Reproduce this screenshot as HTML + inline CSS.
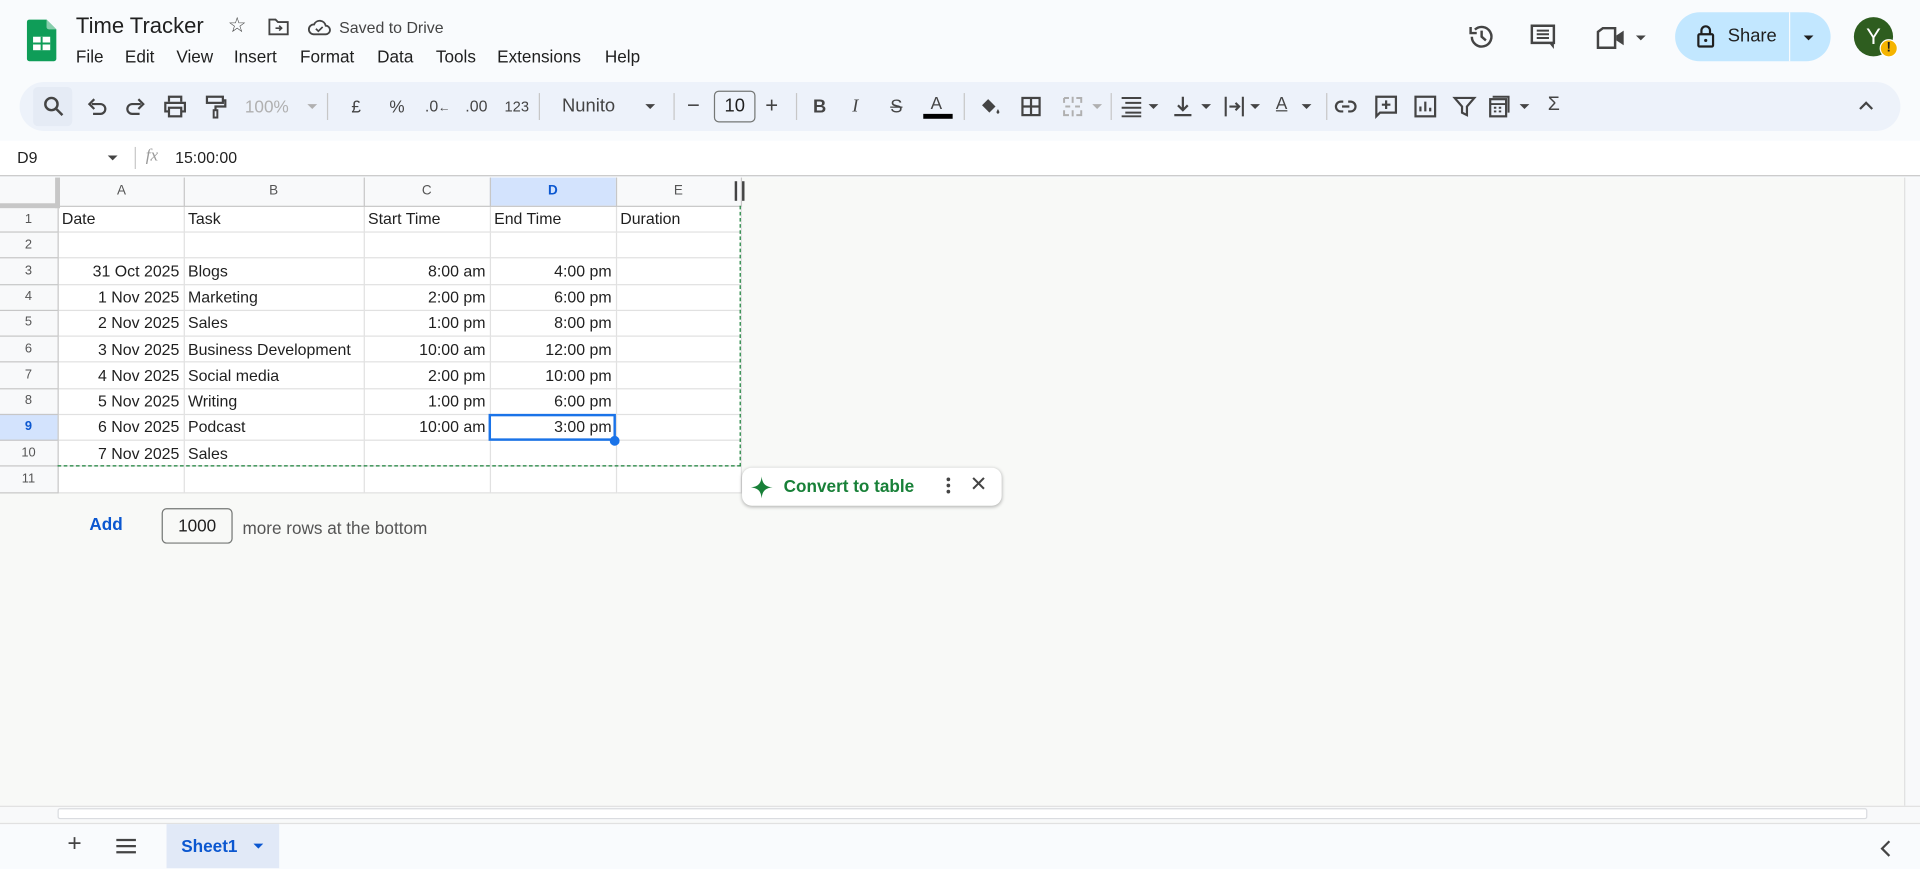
<!DOCTYPE html>
<html><head><meta charset="utf-8"><style>
*{box-sizing:border-box;margin:0;padding:0}
html,body{width:1920px;height:869px;overflow:hidden;background:#f9fbfd;font-family:"Liberation Sans",sans-serif;color:#1f1f1f}
#w{position:absolute;left:0;top:0;width:1568px;height:709px;transform:scale(1.22449);transform-origin:0 0;background:#f9fbfd}
.a{position:absolute}
.ic{position:absolute;top:78px;width:18px;height:18px}
svg{overflow:visible}
.tb{position:absolute;top:79px;font-size:14px;color:#444}
.sep{position:absolute;top:76px;width:1px;height:22px;background:#c7c7c7}
.arr{position:absolute;top:85px;width:0;height:0;border-left:4px solid transparent;border-right:4px solid transparent;border-top:4px solid #444}
table{border-collapse:collapse;table-layout:fixed;position:absolute;left:0;top:145px;background:#fff;font-size:13px}
td{border:1px solid #e1e1e1;height:21.27px;padding:0 3px;white-space:nowrap;overflow:visible;line-height:19px}
tr.h td{height:23px;background:#f8f9fa;color:#555;font-size:11px;text-align:center;border-color:#c7c7c7;border-top:none}
td.rh{background:#f8f9fa;color:#555;font-size:10.5px;text-align:center;border-color:#c7c7c7;padding:0;border-left:none}
.r{text-align:right}
</style></head><body><div id="w">
<svg class="a" style="left:22px;top:16px" width="24" height="34" viewBox="0 0 24 34"><path d="M2 0h14l8 8v24a2 2 0 0 1-2 2H2a2 2 0 0 1-2-2V2a2 2 0 0 1 2-2z" fill="#0f9d58"/><path d="M16 0l8 8h-6a2 2 0 0 1-2-2z" fill="#87ceac"/><rect x="5" y="14" width="14" height="11" fill="#fff"/><path d="M5 19.5h14M12 14v11" stroke="#0f9d58" stroke-width="1.6"/></svg>
<div class="a" style="left:62px;top:11px;font-size:18px">Time Tracker</div>
<div class="a" style="left:186px;top:11px;font-size:17px;color:#444">☆</div>
<svg class="a" style="left:219px;top:15px" width="17" height="14"><path d="M1 1h5l2 2h8v10H1z" fill="none" stroke="#444" stroke-width="1.5"/><path d="M6 8h5M9 6l2 2-2 2" stroke="#444" stroke-width="1.3" fill="none"/></svg>
<svg class="a" style="left:251px;top:15px" width="19" height="14"><path d="M5 13h10a3.5 3.5 0 0 0 0-7 5 5 0 0 0-9.5-1A4 4 0 0 0 5 13z" fill="none" stroke="#444" stroke-width="1.5"/><path d="M7 8.5l2 2 3.5-3.5" stroke="#444" stroke-width="1.4" fill="none"/></svg>
<div class="a" style="left:277px;top:15px;font-size:13px;color:#444">Saved to Drive</div>
<div class="a" style="left:62px;top:38px;font-size:14px;word-spacing:0">
<span class="a" style="left:0">File</span><span class="a" style="left:40px">Edit</span><span class="a" style="left:82px">View</span><span class="a" style="left:129px">Insert</span><span class="a" style="left:183px">Format</span><span class="a" style="left:246px">Data</span><span class="a" style="left:294px">Tools</span><span class="a" style="left:344px;white-space:nowrap">Extensions</span><span class="a" style="left:432px">Help</span></div>
<svg class="a" style="left:1199px;top:19px" width="22" height="22" viewBox="0 0 22 22"><path d="M3 11a8 8 0 1 0 2.5-5.8" fill="none" stroke="#444" stroke-width="2"/><path d="M2 3v5h5" fill="none" stroke="#444" stroke-width="2"/><path d="M11 6v5l3.5 3" fill="none" stroke="#444" stroke-width="2"/></svg>
<svg class="a" style="left:1250px;top:20px" width="21" height="22"><path d="M1 1h18v14H1z" fill="none" stroke="#444" stroke-width="2"/><path d="M5 5h10M5 8h10M5 11h10" stroke="#444" stroke-width="1.6"/><path d="M15 15h4v5z" fill="#444"/></svg>
<svg class="a" style="left:1304px;top:22px" width="24" height="18"><path d="M1 4l4-3h10v16H1z" fill="none" stroke="#444" stroke-width="2"/><path d="M16 7l6-4v12l-6-4z" fill="#444"/></svg>
<div class="arr" style="left:1336px;top:29px"></div>
<div class="a" style="left:1368px;top:10px;width:127px;height:40px;background:#c2e7ff;border-radius:20px"></div>
<div class="a" style="left:1461px;top:10px;width:1px;height:40px;background:#f9fbfd"></div>
<svg class="a" style="left:1386px;top:20px" width="14" height="19"><path d="M3.5 8V5a3.5 3.5 0 0 1 7 0v3" fill="none" stroke="#1f1f1f" stroke-width="1.8"/><rect x="1" y="8" width="12" height="10" rx="1" fill="none" stroke="#1f1f1f" stroke-width="1.8"/><circle cx="7" cy="13" r="1.3" fill="#1f1f1f"/></svg>
<div class="a" style="left:1411px;top:21px;font-size:15px;color:#1f1f1f">Share</div>
<div class="arr" style="left:1473px;top:29px;border-top-color:#1f1f1f"></div>
<div class="a" style="left:1514px;top:14px;width:32px;height:32px;border-radius:50%;background:#2e5d1f;color:#fff;font-size:18px;text-align:center;line-height:32px">Y</div>
<div class="a" style="left:1535px;top:32px;width:15px;height:15px;border-radius:50%;background:#f5b400;border:1px solid #fff;color:#1f1f1f;font-size:11px;font-weight:bold;text-align:center;line-height:13px">!</div>
<div class="a" style="left:16px;top:67px;width:1536px;height:40px;background:#edf2fa;border-radius:20px"></div>
<div class="a" style="left:27px;top:71px;width:32px;height:32px;background:#e5ebf5;border-radius:4px"></div>
<svg class="ic" style="left:35px"><circle cx="7" cy="7" r="5" fill="none" stroke="#444" stroke-width="2"/><path d="M11 11l5 5" stroke="#444" stroke-width="2"/></svg>
<svg class="ic" style="left:70px"><path d="M5 7h7a4 4 0 0 1 0 8H6" fill="none" stroke="#444" stroke-width="1.8"/><path d="M7 3L3 7l4 4" fill="none" stroke="#444" stroke-width="1.8"/></svg>
<svg class="ic" style="left:102px"><path d="M13 7H6a4 4 0 0 0 0 8h6" fill="none" stroke="#444" stroke-width="1.8"/><path d="M11 3l4 4-4 4" fill="none" stroke="#444" stroke-width="1.8"/></svg>
<svg class="ic" style="left:134px"><path d="M4 5V1h10v4M4 13H1V6h16v7h-3" fill="none" stroke="#444" stroke-width="1.8"/><rect x="4" y="10" width="10" height="7" fill="none" stroke="#444" stroke-width="1.8"/></svg>
<svg class="ic" style="left:167px"><rect x="2" y="1" width="13" height="5" fill="none" stroke="#444" stroke-width="1.8"/><path d="M15 4h2v5H9v3" fill="none" stroke="#444" stroke-width="1.8"/><rect x="7.5" y="12" width="3" height="6" fill="none" stroke="#444" stroke-width="1.6"/></svg>
<div class="tb" style="left:200px;color:#b0b0b0">100%</div><div class="arr" style="left:251px;border-top-color:#b0b0b0"></div>
<div class="sep" style="left:267px"></div>
<div class="tb" style="left:287px">£</div><div class="tb" style="left:318px">%</div>
<div class="tb" style="left:347px;font-size:13px">.0<span style="font-size:10px">←</span></div>
<div class="tb" style="left:380px;font-size:13px">.00</div>
<div class="tb" style="left:412px;font-size:12px;top:80px">123</div>
<div class="sep" style="left:440px"></div>
<div class="tb" style="left:459px;font-size:15px;top:78px">Nunito</div><div class="arr" style="left:527px"></div>
<div class="sep" style="left:550px"></div>
<div class="tb" style="left:561px;font-size:18px;top:76px">−</div>
<div class="a" style="left:583px;top:74px;width:34px;height:26px;border:1px solid #747775;border-radius:4px;font-size:15px;text-align:center;line-height:24px">10</div>
<div class="tb" style="left:625px;font-size:18px;top:76px">+</div>
<div class="sep" style="left:650px"></div>
<div class="tb" style="left:664px;font-weight:bold;font-size:15px">B</div>
<div class="tb" style="left:696px;font-style:italic;font-size:15px;font-family:'Liberation Serif',serif">I</div>
<div class="tb" style="left:727px;font-size:15px;text-decoration:line-through">S</div>
<div class="tb" style="left:760px;font-size:14px;top:76px">A</div><div class="a" style="left:754px;top:93px;width:24px;height:4px;background:#000"></div>
<div class="sep" style="left:787px"></div>
<svg class="ic" style="left:799px"><path d="M3 8l5-5 6 6-5 5z" fill="#444"/><path d="M16 11c-1 2-2 3 0 4 2-1 1-2 0-4z" fill="#444"/></svg>
<svg class="ic" style="left:833px"><rect x="2" y="2" width="14" height="14" fill="none" stroke="#444" stroke-width="1.8"/><path d="M9 2v14M2 9h14" stroke="#444" stroke-width="1.8"/></svg>
<svg class="ic" style="left:867px"><path d="M2 2h4M12 2h4v4M2 6V2M2 12v4h4M16 12v4h-4M9 1v5M9 12v5M3 9h4M15 9h-4" stroke="#b0b0b0" stroke-width="1.6" fill="none"/></svg>
<div class="arr" style="left:892px;border-top-color:#b0b0b0"></div>
<div class="sep" style="left:907px"></div>
<svg class="ic" style="left:915px"><path d="M1 2h16M4 6h13M1 10h16M4 14h13M1 17h16" stroke="#444" stroke-width="1.6"/></svg><div class="arr" style="left:938px"></div>
<svg class="ic" style="left:957px"><path d="M9 1v11M5 8l4 4 4-4M2 16h14" stroke="#444" stroke-width="1.8" fill="none"/></svg><div class="arr" style="left:981px"></div>
<svg class="ic" style="left:999px"><path d="M2 1v16M16 1v16M5 9h7M10 6l3 3-3 3" stroke="#444" stroke-width="1.7" fill="none"/></svg><div class="arr" style="left:1021px"></div>
<div class="tb" style="left:1042px;top:76px;text-decoration:underline">A</div><div class="arr" style="left:1063px"></div>
<div class="sep" style="left:1083px"></div>
<svg class="ic" style="left:1090px"><path d="M7 5H5a4 4 0 0 0 0 8h2M11 5h2a4 4 0 0 1 0 8h-2M6 9h6" stroke="#444" stroke-width="1.8" fill="none"/></svg>
<svg class="ic" style="left:1123px"><path d="M1 1h16v13H4l-3 3z" stroke="#444" stroke-width="1.8" fill="none"/><path d="M9 4v7M5.5 7.5h7" stroke="#444" stroke-width="1.8"/></svg>
<svg class="ic" style="left:1155px"><rect x="1" y="1" width="16" height="16" stroke="#444" stroke-width="1.8" fill="none"/><path d="M5 13V9M9 13V5M13 13v-3" stroke="#444" stroke-width="1.8"/></svg>
<svg class="ic" style="left:1187px"><path d="M1 2h16l-6 7v7l-4-2V9z" stroke="#444" stroke-width="1.8" fill="none"/></svg>
<svg class="ic" style="left:1216px"><rect x="1" y="3" width="13" height="14" stroke="#444" stroke-width="1.8" fill="none"/><path d="M1 7h13M4 10h2M8 10h2M4 13h2M8 13h2M3 1h13v13" stroke="#444" stroke-width="1.6" fill="none"/></svg><div class="arr" style="left:1241px"></div>
<div class="tb" style="left:1264px;font-size:16px;top:77px">Σ</div>
<svg class="ic" style="left:1515px"><path d="M4 11l5-5 5 5" stroke="#444" stroke-width="1.8" fill="none"/></svg>
<div class="a" style="left:0;top:115px;width:1568px;height:29px;background:#fff;border-bottom:1px solid #c7c7c7"></div>
<div class="a" style="left:14px;top:121px;font-size:13px">D9</div>
<div class="arr" style="left:88px;top:127px"></div>
<div class="a" style="left:110px;top:120px;width:1px;height:18px;background:#c7c7c7"></div>
<div class="a" style="left:119px;top:120px;font-size:14px;font-style:italic;color:#999;font-family:'Liberation Serif',serif">fx</div>
<div class="a" style="left:143px;top:121px;font-size:13px">15:00:00</div>
<div class="a" style="left:0;top:145px;width:1568px;height:527px;background:#f8f9f7"></div>
<table>
<colgroup><col style="width:47px"><col style="width:103px"><col style="width:147px"><col style="width:103px"><col style="width:103px"><col style="width:102px"></colgroup>
<tr class="h"><td style="border-left:none;border-right:4px solid #c7c7c7;border-bottom:4px solid #c7c7c7"></td><td>A</td><td>B</td><td>C</td><td style="background:#d3e3fd;color:#0b57d0;font-weight:bold">D</td><td>E</td></tr>
<tr><td class="rh">1</td><td>Date</td><td>Task</td><td>Start Time</td><td>End Time</td><td>Duration</td></tr>
<tr><td class="rh">2</td><td></td><td></td><td></td><td></td><td></td></tr>
<tr><td class="rh">3</td><td class="r">31 Oct 2025</td><td>Blogs</td><td class="r">8:00 am</td><td class="r">4:00 pm</td><td></td></tr>
<tr><td class="rh">4</td><td class="r">1 Nov 2025</td><td>Marketing</td><td class="r">2:00 pm</td><td class="r">6:00 pm</td><td></td></tr>
<tr><td class="rh">5</td><td class="r">2 Nov 2025</td><td>Sales</td><td class="r">1:00 pm</td><td class="r">8:00 pm</td><td></td></tr>
<tr><td class="rh">6</td><td class="r">3 Nov 2025</td><td>Business Development</td><td class="r">10:00 am</td><td class="r">12:00 pm</td><td></td></tr>
<tr><td class="rh">7</td><td class="r">4 Nov 2025</td><td>Social media</td><td class="r">2:00 pm</td><td class="r">10:00 pm</td><td></td></tr>
<tr><td class="rh">8</td><td class="r">5 Nov 2025</td><td>Writing</td><td class="r">1:00 pm</td><td class="r">6:00 pm</td><td></td></tr>
<tr><td class="rh" style="background:#d3e3fd;color:#0b57d0;font-weight:bold">9</td><td class="r">6 Nov 2025</td><td>Podcast</td><td class="r">10:00 am</td><td class="r">3:00 pm</td><td></td></tr>
<tr><td class="rh">10</td><td class="r">7 Nov 2025</td><td>Sales</td><td></td><td></td><td></td></tr>
<tr><td class="rh">11</td><td></td><td></td><td></td><td></td><td></td></tr>
</table>
<div class="a" style="left:47px;top:168px;width:558px;height:213px;border-right:1px dashed #188038;border-bottom:1px dashed #188038"></div>
<div class="a" style="left:399px;top:338px;width:104px;height:22px;border:2px solid #1a73e8"></div>
<div class="a" style="left:498px;top:356px;width:8px;height:8px;border-radius:50%;background:#1a73e8"></div>
<div class="a" style="left:600px;top:148px;width:2px;height:16px;background:#444"></div>
<div class="a" style="left:606px;top:148px;width:2px;height:16px;background:#444"></div>
<div class="a" style="left:606px;top:382px;width:212px;height:31px;background:#fff;border-radius:8px;box-shadow:0 1px 3px rgba(0,0,0,.3)"></div>
<svg class="a" style="left:613px;top:389px" width="18" height="18" viewBox="0 0 18 18"><path d="M9 0C9.5 6 12 8.5 18 9 12 9.5 9.5 12 9 18 8.5 12 6 9.5 0 9 6 8.5 8.5 6 9 0z" fill="#188038"/></svg>
<div class="a" style="left:640px;top:389px;font-size:14px;color:#188038;font-weight:bold">Convert to table</div>
<div class="a" style="left:773px;top:390px;width:3px;height:3px;background:#444;border-radius:50%;box-shadow:0 5px 0 #444,0 10px 0 #444"></div>
<div class="a" style="left:792px;top:386px;font-size:17px;color:#444">✕</div>
<div class="a" style="left:73px;top:420px;font-size:14px;color:#0b57d0;font-weight:bold">Add</div>
<div class="a" style="left:132px;top:415px;width:58px;height:29px;border:1px solid #747775;border-radius:4px;font-size:14px;text-align:center;line-height:27px;background:#f8f9f7">1000</div>
<div class="a" style="left:198px;top:423px;font-size:14px;color:#555">more rows at the bottom</div>
<div class="a" style="left:1555px;top:145px;width:13px;height:515px;background:#f8f9fa;border-left:1px solid #e1e1e1"></div>
<div class="a" style="left:0;top:658px;width:1568px;height:13px;background:#f8f9fa;border-top:1px solid #e1e1e1"></div>
<div class="a" style="left:47px;top:660px;width:1478px;height:9px;border:1px solid #dadce0;border-radius:2px;background:#fff"></div>
<div class="a" style="left:0;top:672px;width:1568px;height:37px;background:#f9fbfd;border-top:1px solid #e1e1e1"></div>
<div class="a" style="left:55px;top:678px;font-size:20px;color:#444">+</div>
<svg class="a" style="left:95px;top:685px" width="16" height="12"><path d="M0 1h16M0 6h16M0 11h16" stroke="#444" stroke-width="1.8"/></svg>
<div class="a" style="left:136px;top:673px;width:92px;height:36px;background:#e1e9f7"></div>
<div class="a" style="left:148px;top:683px;font-size:14px;color:#0b57d0;font-weight:bold">Sheet1</div>
<div class="arr" style="left:207px;top:689px;border-top-color:#0b57d0"></div>
<svg class="a" style="left:1535px;top:686px" width="10" height="14"><path d="M8 1L2 7l6 6" stroke="#444" stroke-width="1.8" fill="none"/></svg>
</div></body></html>
